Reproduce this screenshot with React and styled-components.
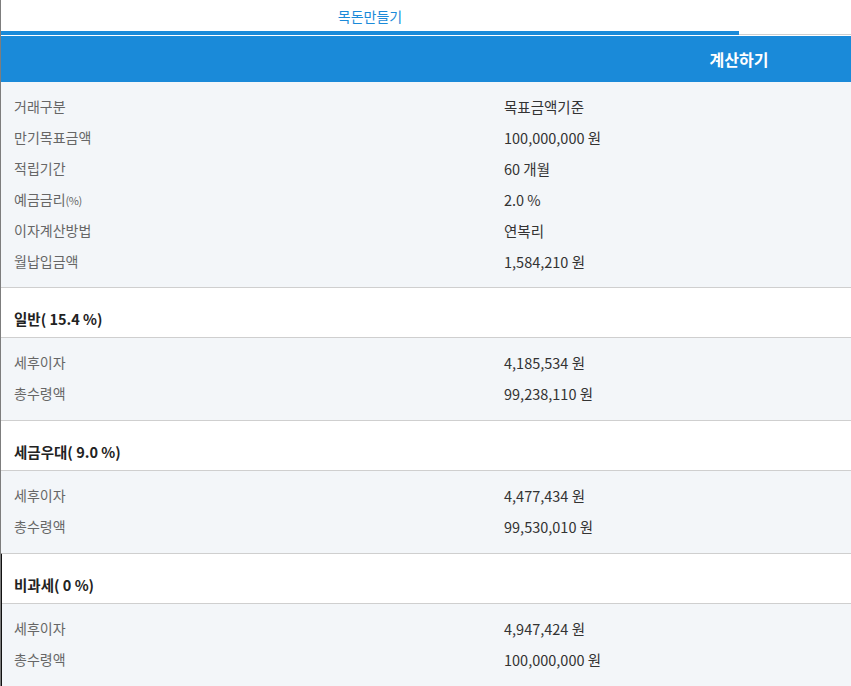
import React from "react";
import styled, { createGlobalStyle } from "styled-components";

const summary = [
  { label: "거래구분", value: "목표금액기준" },
  { label: "만기목표금액", value: "100,000,000 원" },
  { label: "적립기간", value: "60 개월" },
  { label: "예금금리", unit: "(%)", value: "2.0 %" },
  { label: "이자계산방법", value: "연복리" },
  { label: "월납입금액", value: "1,584,210 원" },
];

const groups = [
  { title: "일반( 15.4 %)", interest: "4,185,534 원", total: "99,238,110 원" },
  { title: "세금우대( 9.0 %)", interest: "4,477,434 원", total: "99,530,010 원" },
  { title: "비과세( 0 %)", interest: "4,947,424 원", total: "100,000,000 원", dark: true },
];

const GlobalStyle = createGlobalStyle`
  body {
    margin: 0;
    background: #fff;
    font-family: "Noto Sans CJK KR", "Noto Sans", sans-serif;
  }
`;

export default function App() {
  return (
    <>
      <GlobalStyle />
      <Wrapper>
        <TabBar>
          <Tab>목돈만들기</Tab>
        </TabBar>
        <Header>
          <CalcButton>계산하기</CalcButton>
        </Header>
        <Rows>
          {summary.map((row) => (
            <Row key={row.label}>
              <Label>
                {row.label}
                {row.unit && <Small>{row.unit}</Small>}
              </Label>
              <Value>{row.value}</Value>
            </Row>
          ))}
        </Rows>
        {groups.map((g) => (
          <Group key={g.title} $dark={g.dark}>
            <GroupTitle>{g.title}</GroupTitle>
            <Rows $bordered>
              <Row>
                <Label>세후이자</Label>
                <Value>{g.interest}</Value>
              </Row>
              <Row>
                <Label>총수령액</Label>
                <Value>{g.total}</Value>
              </Row>
            </Rows>
          </Group>
        ))}
      </Wrapper>
    </>
  );
}

const Wrapper = styled.div`
  border-left: 1px solid #7d7d7d;
  min-height: 686px;
  overflow: hidden;
`;

const TabBar = styled.div`
  display: flex;
  height: 34px;
  border-bottom: 1px solid #cfcfcf;
`;

const Tab = styled.div`
  width: 738px;
  height: 31px;
  margin-bottom: -1px;
  border-bottom: 4px solid #1a8ad9;
  display: flex;
  align-items: center;
  justify-content: center;
  color: #1a8ad9;
  font-size: 14px;
`;

const Header = styled.div`
  margin-top: 1px;
  height: 46px;
  background: #1a8ad9;
  display: flex;
  justify-content: flex-end;
`;

const CalcButton = styled.div`
  width: 224px;
  display: flex;
  align-items: center;
  justify-content: center;
  color: #fff;
  font-size: 16px;
  font-weight: 700;
`;

const Rows = styled.div`
  background: #f3f6f9;
  padding: 10px 0 ${(p) => (p.$bordered ? "10px" : "9px")};
  border-top: ${(p) => (p.$bordered ? "1px solid #cfcfcf" : "none")};
`;

const Row = styled.div`
  display: grid;
  grid-template-columns: 490px 1fr;
  height: 31px;
  box-sizing: border-box;
  padding-bottom: 3px;
  align-items: center;
  padding-left: 13px;
`;

const Label = styled.div`
  color: #666;
  font-size: 14px;
`;

const Small = styled.span`
  font-size: 11px;
  letter-spacing: -0.5px;
`;

const Value = styled.div`
  color: #333;
  font-size: 14.5px;
`;

const Group = styled.div`
  border-top: 1px solid #cfcfcf;
  ${(p) =>
    p.$dark &&
    `
    margin-left: -1px;
    border-left: 2px solid #111;
    ${Row} { padding-left: 12px; }
    ${GroupTitle} { padding-left: 12px; }
  `}
`;

const GroupTitle = styled.div`
  background: #fff;
  padding: 21px 0 8px 13px;
  line-height: 20px;
  color: #222;
  font-size: 14.5px;
  font-weight: 700;
`;
